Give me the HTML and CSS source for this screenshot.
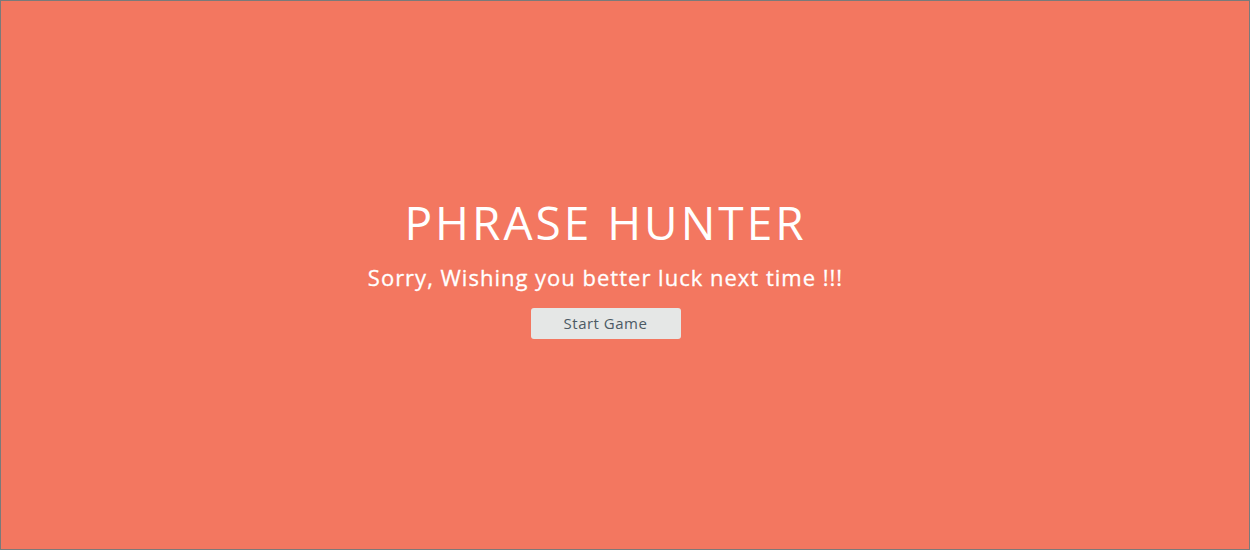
FILE: index.html
```html
<!DOCTYPE html>
<html lang="en">
<head>
<meta charset="utf-8">
<title>Phrase Hunter</title>
<link rel="stylesheet" href="styles.css">
</head>
<body>
<div class="main-container">
  <div class="overlay">
    <h2 class="title">PHRASE HUNTER</h2>
    <h1 class="game-over-message">Sorry, Wishing you better luck next time !!!</h1>
    <button class="btn-reset">Start Game</button>
  </div>
</div>
</body>
</html>
```

FILE: styles.css
```css
html, body {
  margin: 0;
  padding: 0;
}

body {
  font-family: "Open Sans", "Noto Sans", sans-serif;
}

.main-container {
  box-sizing: border-box;
  width: 1250px;
  height: 550px;
  border: 1px solid #7a7a7a;
  background: #f37760;
}

.overlay {
  height: 100%;
  display: flex;
  flex-direction: column;
  align-items: center;
  justify-content: center;
  color: #fff;
  padding: 0 39px 18px 0;
  box-sizing: border-box;
}

.title {
  margin: 0;
  font-size: 46px;
  font-weight: 400;
  line-height: 56px;
  letter-spacing: 3px;
}

.game-over-message {
  margin: 12px 0 0;
  font-size: 22px;
  font-weight: 500;
  line-height: 30px;
  letter-spacing: 1px;
  -webkit-text-stroke: 0.3px #fff;
}

.btn-reset {
  margin-top: 16px;
  width: 150px;
  height: 31px;
  border: none;
  border-radius: 3px;
  background: #e5e7e6;
  color: #4c5a64;
  font-family: "Open Sans", "Noto Sans", sans-serif;
  font-size: 15px;
  font-weight: 400;
  letter-spacing: 0.5px;
  padding: 0;
}
```
